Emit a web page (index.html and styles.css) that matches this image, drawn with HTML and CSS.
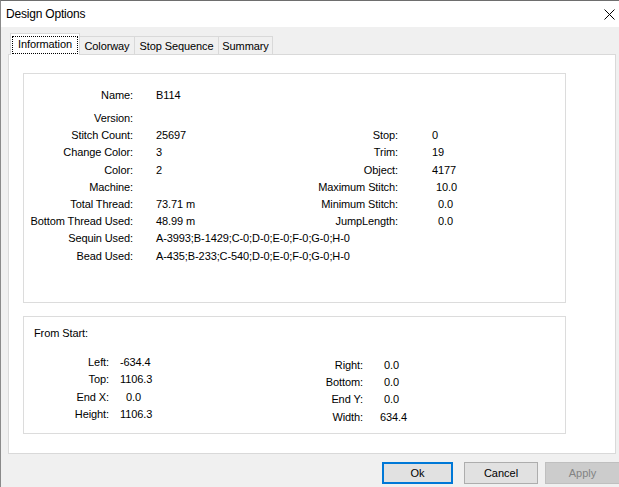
FILE: index.html
```html
<!DOCTYPE html>
<html>
<head>
<meta charset="utf-8">
<title>Design Options</title>
<link rel="stylesheet" href="styles.css">
</head>
<body>
<div class="window">
  <div class="titlebar">
    <span class="title">Design Options</span>
    <svg class="close" width="11" height="11" viewBox="0 0 11 11"><path d="M0.5 0.5 L10.5 10.5 M10.5 0.5 L0.5 10.5" stroke="#000" stroke-width="1" fill="none"/></svg>
  </div>
  <div class="client">
    <div class="tabs">
      <div class="tab active tab-info"><span class="focus">Information</span></div>
      <div class="tab tab-color">Colorway</div>
      <div class="tab tab-stop">Stop Sequence</div>
      <div class="tab tab-sum">Summary</div>
    </div>
    <div class="panel">
      <div class="group group-info">
        <div class="info-grid">
          <div class="lbl">Name:</div><div class="val span3">B114</div>
          <div class="lbl">Version:</div><div class="val span3"></div>
          <div class="lbl">Stitch Count:</div><div class="val">25697</div><div class="lbl">Stop:</div><div class="val2">0</div>
          <div class="lbl">Change Color:</div><div class="val">3</div><div class="lbl">Trim:</div><div class="val2">19</div>
          <div class="lbl">Color:</div><div class="val">2</div><div class="lbl">Object:</div><div class="val2">4177</div>
          <div class="lbl">Machine:</div><div class="val"></div><div class="lbl">Maximum Stitch:</div><div class="val2 nudge4">10.0</div>
          <div class="lbl">Total Thread:</div><div class="val">73.71 m</div><div class="lbl">Minimum Stitch:</div><div class="val2 nudge6">0.0</div>
          <div class="lbl">Bottom Thread Used:</div><div class="val">48.99 m</div><div class="lbl">JumpLength:</div><div class="val2 nudge6">0.0</div>
          <div class="lbl">Sequin Used:</div><div class="val span3">A-3993;B-1429;C-0;D-0;E-0;F-0;G-0;H-0</div>
          <div class="lbl">Bead Used:</div><div class="val span3">A-435;B-233;C-540;D-0;E-0;F-0;G-0;H-0</div>
        </div>
      </div>
      <div class="group group-start">
        <div class="group-title">From Start:</div>
        <div class="start-body">
          <div class="start-left">
            <div class="lbl">Left:</div><div class="sval">-634.4</div>
            <div class="lbl">Top:</div><div class="sval">1106.3</div>
            <div class="lbl">End X:</div><div class="sval nudge-zero">0.0</div>
            <div class="lbl">Height:</div><div class="sval">1106.3</div>
          </div>
          <div class="start-right">
            <div class="lbl">Right:</div><div class="rval">0.0</div>
            <div class="lbl">Bottom:</div><div class="rval">0.0</div>
            <div class="lbl">End Y:</div><div class="rval">0.0</div>
            <div class="lbl">Width:</div><div class="rval wide">634.4</div>
          </div>
        </div>
      </div>
    </div>
    <div class="buttons">
      <button class="btn btn-ok">Ok</button>
      <button class="btn btn-cancel">Cancel</button>
      <button class="btn btn-apply" disabled>Apply</button>
    </div>
  </div>
</div>
</body>
</html>
```

FILE: styles.css
```css
html, body {
  margin: 0;
  padding: 0;
}
body {
  font-family: "Liberation Sans", Arial, sans-serif;
  font-size: 11px;
  letter-spacing: -0.1px;
  color: #000;
  background: #f0f0f0;
  overflow: hidden;
}
.window {
  width: 619px;
  height: 487px;
  box-sizing: border-box;
  border-top: 1px solid #6e6e6e;
  border-left: 1px solid #8a8a8a;
  background: #f0f0f0;
  display: flex;
  flex-direction: column;
  overflow: hidden;
}
.titlebar {
  height: 26px;
  flex: none;
  background: #fff;
  display: flex;
  align-items: center;
  justify-content: space-between;
  padding: 0 4px 0 5px;
}
.title {
  font-size: 12px;
  letter-spacing: -0.2px;
}
.close {
  display: block;
}
.client {
  flex: 1;
  padding: 0 3px 0 7px;
  display: flex;
  flex-direction: column;
}
.tabs {
  height: 27px;
  flex: none;
  display: flex;
  align-items: flex-end;
  padding-left: 2px;
}
.tab {
  box-sizing: border-box;
  height: 18px;
  line-height: 17px;
  padding-top: 1px;
  border: 1px solid #d9d9d9;
  border-bottom: none;
  background: #f0f0f0;
  text-align: center;
  margin-left: -1px;
  white-space: nowrap;
}
.tab-info { width: 70px; margin-left: 0; }
.tab-color { width: 56px; }
.tab-stop { width: 85px; }
.tab-sum { width: 55px; }
.tab.active {
  height: 22px;
  padding: 2px 1px 1px 1px;
  margin-bottom: -1px;
  background: #fff;
  position: relative;
  z-index: 1;
  line-height: normal;
}
.focus {
  display: block;
  box-sizing: border-box;
  height: 18px;
  line-height: 15px;
  border: 1px dotted #000;
}
.panel {
  box-sizing: border-box;
  height: 400px;
  flex: none;
  background: #fff;
  border: 1px solid #d9d9d9;
  padding: 18px 49px 0 14px;
  display: flex;
  flex-direction: column;
}
.group {
  box-sizing: border-box;
  border: 1px solid #dcdcdc;
  background: #fff;
}
.group-info {
  height: 230px;
  padding-top: 13px;
}
.info-grid {
  display: grid;
  grid-template-columns: 109px 165px 100px 1fr;
  grid-template-rows: 23px repeat(9, 17.2px);
  align-items: start;
}
.info-grid > div {
  line-height: 17px;
  white-space: nowrap;
}
.lbl {
  text-align: right;
}
.val {
  padding-left: 23px;
}
.span3 {
  grid-column: 2 / -1;
}
.val2 {
  padding-left: 34px;
}
.nudge4 { padding-left: 38px; }
.nudge6 { padding-left: 40px; }
.group-start {
  height: 118px;
  margin-top: 13px;
  padding-top: 8px;
}
.group-title {
  line-height: 17px;
  padding-left: 10px;
}
.start-body {
  display: flex;
  margin-top: 12px;
}
.start-left {
  width: 255px;
  display: grid;
  grid-template-columns: 85px 1fr;
  grid-auto-rows: 17.4px;
  align-items: start;
}
.start-right {
  margin-top: 3px;
  display: grid;
  grid-template-columns: 84px 1fr;
  grid-auto-rows: 17.2px;
  align-items: start;
}
.start-body .lbl, .sval, .rval {
  line-height: 17px;
  white-space: nowrap;
}
.sval { padding-left: 11px; }
.nudge-zero { padding-left: 17px; }
.rval { padding-left: 21px; }
.rval.wide { padding-left: 17px; }
.buttons {
  display: flex;
  margin-top: 8px;
  padding-left: 374px;
}
.btn {
  box-sizing: border-box;
  flex: none;
  height: 22px;
  margin: 0;
  padding: 0;
  font-family: "Liberation Sans", Arial, sans-serif;
  font-size: 11px;
  color: #000;
  background: #e1e1e1;
  border: 1px solid #adadad;
  border-radius: 0;
}
.btn-ok {
  width: 71px;
  border: 2px solid #0078d7;
}
.btn-cancel {
  width: 74px;
  margin-left: 11px;
}
.btn-apply {
  width: 75px;
  margin-left: 7px;
  background: #cccccc;
  border-color: #bfbfbf;
  color: #838383;
}
```
